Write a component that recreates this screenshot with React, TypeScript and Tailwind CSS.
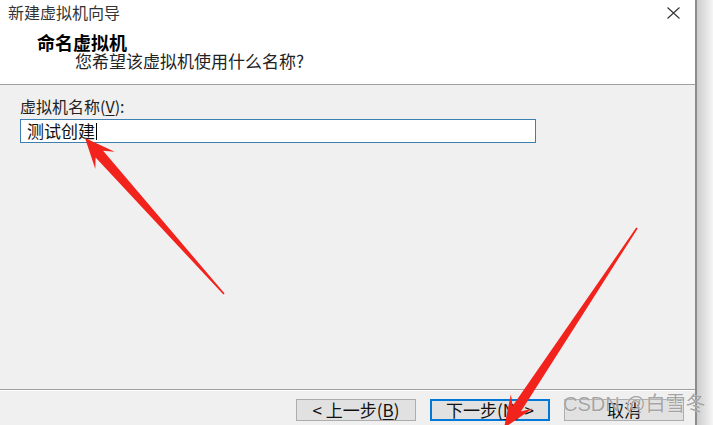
import React from "react"

type Pt = [number, number]

// red screenshot-annotation arrow, tail -> tip
function arrowPoints(tail: Pt, tip: Pt, headLen: number, headW: number, neckW: number, tailW: number) {
  const dx = tip[0] - tail[0]
  const dy = tip[1] - tail[1]
  const len = Math.hypot(dx, dy)
  const d: Pt = [dx / len, dy / len]
  const p: Pt = [-d[1], d[0]]
  const wing: Pt = [tip[0] - headLen * d[0], tip[1] - headLen * d[1]]
  const neck: Pt = [tip[0] - headLen * 0.72 * d[0], tip[1] - headLen * 0.72 * d[1]]
  const at = (b: Pt, w: number): string => `${(b[0] + w * p[0]).toFixed(1)},${(b[1] + w * p[1]).toFixed(1)}`
  return [
    at(tail, tailW),
    at(neck, neckW),
    at(wing, headW),
    `${tip[0]},${tip[1]}`,
    at(wing, -headW),
    at(neck, -neckW),
    at(tail, -tailW),
  ].join(" ")
}

const WinButton = ({ children, primary }: { children: React.ReactNode; primary?: boolean }) => (
  <div
    className={
      "flex h-[22px] w-[120px] items-center justify-center bg-[#e1e1e1] text-[17px] leading-[20px] text-[#111] " +
      (primary ? "border-2 border-[#0078d7]" : "border border-[#adadad]")
    }
  >
    {children}
  </div>
)

export default function App() {
  return (
    <div className="relative flex h-[425px] w-[713px] overflow-hidden bg-[#f0f0f0] font-['Noto_Sans_CJK_SC','Microsoft_YaHei',sans-serif]">
      <div className="flex w-[695px] flex-col">
        {/* header */}
        <div className="h-[85px] border-b border-[#a0a0a0] bg-white">
          <div className="flex items-center justify-between pl-[8px] pr-[15px] pt-[2px]">
            <span className="text-[16px] leading-[20px] text-[#333]">新建虚拟机向导</span>
            <svg width="13" height="12" viewBox="0 0 13 12" className="mt-[1px]">
              <path d="M0.5 0.5 L12.5 11.5 M12.5 0.5 L0.5 11.5" stroke="#333" strokeWidth="1.1" fill="none" />
            </svg>
          </div>
          <div className="mt-[11px] pl-[37px] text-[18px] font-bold leading-[18px] text-black">命名虚拟机</div>
          <div className="mt-[1px] pl-[75px] text-[17px] leading-[18px] text-[#222]">您希望该虚拟机使用什么名称?</div>
        </div>

        {/* body */}
        <div className="flex-1 bg-[#f0f0f0] px-[20px] pt-[11px]">
          <div className="text-[16px] leading-[20px] text-[#222]">
            虚拟机名称(<span className="underline underline-offset-2">V</span>):
          </div>
          <div className="mt-[3px] flex h-[24px] w-[516px] items-center border border-[#3c7fb1] bg-white pl-[6px]">
            <span className="text-[17px] leading-[20px] text-[#111]">测试创建</span>
            <span className="ml-[1px] h-[17px] w-[1px] bg-black" />
          </div>
        </div>

        {/* footer */}
        <div className="flex h-[36px] justify-end gap-[14px] border-t border-[#a0a0a0] bg-[#f0f0f0] pr-[11px] pt-[9px] shadow-[inset_0_1px_0_#ffffff]">
          <WinButton>
            &lt; 上一步(<span className="underline underline-offset-2">B</span>)
          </WinButton>
          <WinButton primary>
            下一步(<span className="underline underline-offset-2">N</span>) &gt;
          </WinButton>
          <WinButton>取消</WinButton>
        </div>
      </div>

      <div className="w-[2px] bg-[#8c8c8c]" />
      <div className="flex-1 bg-gradient-to-r from-[#cdcdcd] to-[#f5f5f5]" />

      {/* annotation arrows */}
      <svg className="pointer-events-none absolute inset-0" width="713" height="425" viewBox="0 0 713 425">
        <polygon points={arrowPoints([224, 294], [85, 138], 30, 13, 5, 0.8)} fill="#f2231c" />
        <polygon points={arrowPoints([637, 228], [504, 428], 32, 13, 5, 0.8)} fill="#f2231c" />
      </svg>

      {/* watermark */}
      <div className="pointer-events-none absolute left-[563px] top-[391px] whitespace-nowrap font-['Liberation_Sans','Noto_Sans_CJK_SC',sans-serif] text-[20px] leading-[26px] text-[rgba(140,140,140,0.8)] [text-shadow:0_0_1px_#ffffff]">
        CSDN @白雪冬
      </div>
    </div>
  )
}
